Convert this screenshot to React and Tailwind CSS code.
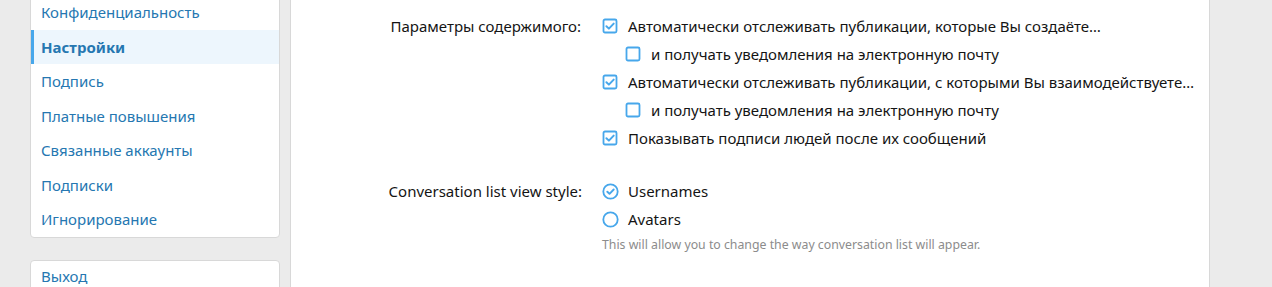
import { useState } from 'react'

const sideLinks = [
  "Конфиденциальность",
  "Настройки",
  "Подпись",
  "Платные повышения",
  "Связанные аккаунты",
  "Подписки",
  "Игнорирование"
];

function CheckBox({ checked }) {
  return (
    <svg width="16" height="16" viewBox="0 0 16 16" className="shrink-0">
      <rect x="1.5" y="1.5" width="13" height="13" rx="1.5" fill="none" stroke="#47a7eb" strokeWidth="1.8" />
      {checked && (
        <path d="M4.4 8.2 L6.9 10.6 L11.7 5.6" fill="none" stroke="#47a7eb" strokeWidth="2" strokeLinecap="round" strokeLinejoin="round" />
      )}
    </svg>
  )
}

function Radio({ checked }) {
  return (
    <svg width="17" height="17" viewBox="0 0 17 17" className="shrink-0">
      <circle cx="8.5" cy="8.5" r="7.2" fill="none" stroke="#47a7eb" strokeWidth="1.8" />
      {checked && (
        <path d="M5.3 8.7 L7.5 10.8 L11.7 6.5" fill="none" stroke="#47a7eb" strokeWidth="1.9" strokeLinecap="round" strokeLinejoin="round" />
      )}
    </svg>
  )
}

function CheckRow({ checked, label, sub }) {
  return (
    <div className={"flex items-center h-[28px] " + (sub ? "pl-[23px]" : "")}>
      <div className="w-[26px] flex"><CheckBox checked={checked} /></div>
      <span>{label}</span>
    </div>
  )
}

function App() {
  const [active] = useState("Настройки");

  return (
    <div className="h-[287px] overflow-hidden bg-[#ebebeb] flex gap-[10px] pl-[30px] text-[15px] text-[#141414]" style={{ fontFamily: '"Noto Sans", "Open Sans", sans-serif' }}>
      {/* sidebar */}
      <div className="w-[250px] shrink-0 flex flex-col gap-[22px]">
        <div className="-mt-[6px] bg-white border border-[#d8d8d8] rounded-b-[4px]">
          {sideLinks.map((l) => (
            l === active ? (
              <div key={l} className="h-[34.5px] flex items-center pl-[7px] border-l-[3px] border-[#47a7eb] bg-[#edf6fd] text-[#2577b1] font-bold">{l}</div>
            ) : (
              <div key={l} className="h-[34.5px] flex items-center pl-[10px] text-[#2577b1]">{l}</div>
            )
          ))}
        </div>
        <div className="bg-white border border-[#d8d8d8] rounded-t-[4px] h-[40px]">
          <div className="h-[32px] flex items-center pl-[10px] text-[#2577b1]">Выход</div>
        </div>
      </div>

      {/* main */}
      <div className="w-[920px] shrink-0 bg-white border-x border-[#d8d8d8]">
        <div className="flex pt-[12px]">
          <div className="w-[300px] text-right pr-[10px] h-[28px] flex items-center justify-end">Параметры содержимого:</div>
          <div className="pl-[11px] flex flex-col">
            <CheckRow checked label="Автоматически отслеживать публикации, которые Вы создаёте…" />
            <CheckRow sub label="и получать уведомления на электронную почту" />
            <CheckRow checked label="Автоматически отслеживать публикации, с которыми Вы взаимодействуете…" />
            <CheckRow sub label="и получать уведомления на электронную почту" />
            <CheckRow checked label="Показывать подписи людей после их сообщений" />
          </div>
        </div>

        <div className="flex mt-[25px]">
          <div className="w-[301px] text-right pr-[10px] h-[28px] flex items-center justify-end">Conversation list view style:</div>
          <div className="pl-[10px] flex flex-col">
            <div className="flex items-center h-[28px]">
              <div className="w-[26px] flex"><Radio checked /></div>
              <span>Usernames</span>
            </div>
            <div className="flex items-center h-[28px]">
              <div className="w-[26px] flex"><Radio /></div>
              <span>Avatars</span>
            </div>
            <div className="text-[12.3px] text-[#8c8c8c] mt-[3px]">This will allow you to change the way conversation list will appear.</div>
          </div>
        </div>
      </div>
    </div>
  )
}

export default App
